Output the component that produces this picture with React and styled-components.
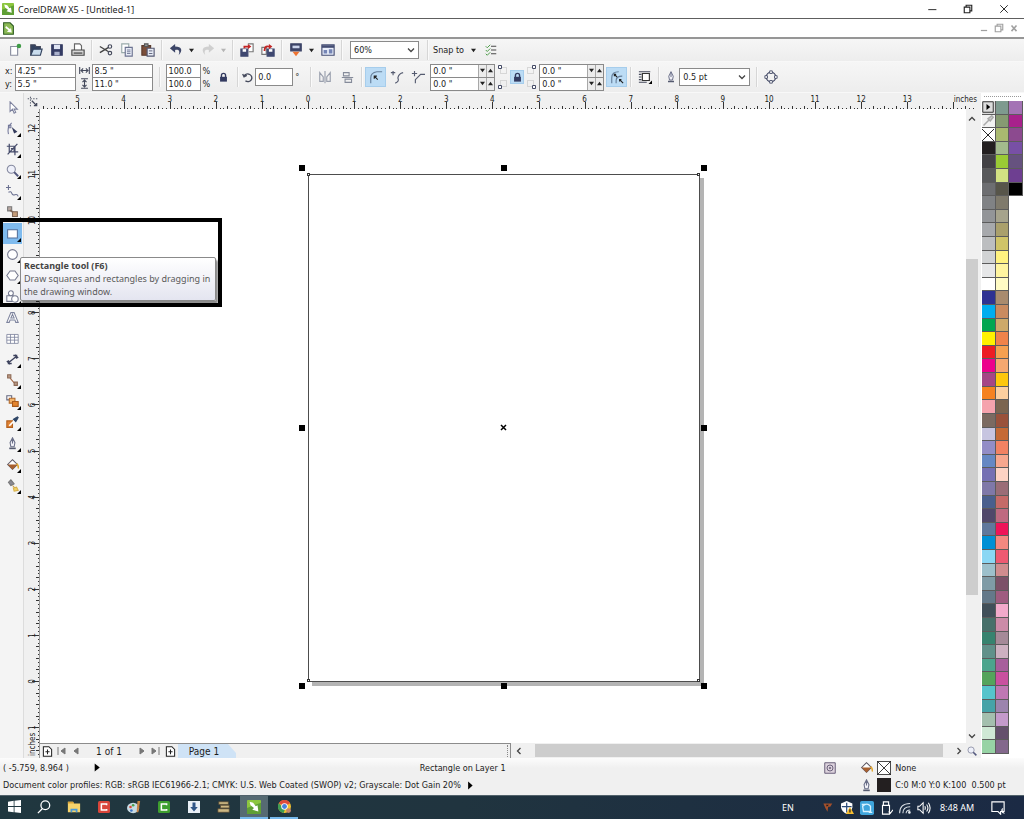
import React from 'react';
import styled, { createGlobalStyle, css } from 'styled-components';

const UI_FONT = '"DejaVu Sans Condensed", "DejaVu Sans", sans-serif';
const TITLE_FONT = '"Noto Sans", "Open Sans", sans-serif';

const GlobalStyle = createGlobalStyle`
  * {
    box-sizing: border-box;
  }
  body {
    margin: 0;
    background: #f0f0f0;
    color: #1c1c1c;
    font-family: ${UI_FONT};
    font-size: 9px;
  }
  button, input, select {
    font: inherit;
    color: inherit;
  }
  svg {
    display: block;
    flex: none;
  }
`;

const Window = styled.div`
  position: relative;
  display: flex;
  flex-direction: column;
  min-height: 100vh;
  overflow: hidden;
`;

const TitleBar = styled.header`
  display: flex;
  align-items: center;
  gap: 4px;
  height: 19px;
  padding: 0 15px 0 2px;
  background: #fff;
  border-bottom: 1px solid #5e5e5e;
`;

const Title = styled.h1`
  flex: 1;
  margin: 0;
  font-family: ${TITLE_FONT};
  font-size: 9px;
  font-weight: 400;
`;

const MenuBar = styled.div`
  display: flex;
  align-items: center;
  justify-content: space-between;
  height: 20px;
  padding: 0 5px 0 2px;
  background: #fff;
  border-bottom: 2px solid #969696;
`;

const WindowControls = styled.div`
  display: flex;
  gap: ${({ $small }) => ($small ? '5px' : '26px')};
  color: ${({ $small }) => ($small ? '#a0a0a0' : '#222')};
`;

const PlainButton = styled.button`
  display: flex;
  align-items: center;
  justify-content: center;
  padding: 0;
  border: 0;
  background: none;
`;

const Toolbar = styled.div`
  display: flex;
  align-items: center;
  height: ${({ $height }) => $height}px;
  padding-left: 4px;
  background: linear-gradient(#f6f6f6, #ededed);
  border-bottom: 1px solid #f8f8f8;
`;

const ToolButton = styled(PlainButton)`
  width: ${({ $narrow }) => ($narrow ? 14 : 21)}px;
  height: ${({ $narrow }) => ($narrow ? 14 : 20)}px;
  ${({ $active }) =>
    $active &&
    css`
      background: #bcdcf5;
      border: 1px solid #a6cdec;
    `}
`;

const DropButton = styled(PlainButton)`
  width: 11px;
  height: 20px;
`;

const Separator = styled.span`
  width: 1px;
  height: 20px;
  margin: 0 3px;
  background: #d6d6d6;
  box-shadow: 1px 0 #fafafa;
`;

const SelectBox = styled.label`
  position: relative;
  display: flex;
  align-items: center;
  width: ${({ $width }) => $width}px;
  height: 18px;
  background: #fff;
  border: 1px solid #8a8a8a;

  svg {
    position: absolute;
    right: 3px;
    pointer-events: none;
  }
`;

const Select = styled.select`
  width: 100%;
  height: 100%;
  padding: 0 3px;
  border: 0;
  background: none;
  appearance: none;
`;

const SnapButton = styled(PlainButton)`
  gap: 7px;
  margin: 0 4px 0 2px;
`;

const PropGroup = styled.div`
  display: flex;
  align-items: center;
  gap: 2px;
  padding-left: ${({ $start }) => $start || 0}px;
  padding-right: ${({ $end }) => $end || 0}px;
`;

const LabelStack = styled.div`
  display: flex;
  flex-direction: column;
  gap: 1px;

  > * {
    display: flex;
    align-items: center;
    height: 12px;
  }
`;

const FieldStack = styled.div`
  width: ${({ $width }) => $width}px;
  background: #fff;
  border: 1px solid #8a8a8a;
`;

const FieldRow = styled.div`
  display: flex;
  align-items: center;
  height: ${({ $tall }) => ($tall ? 16 : 12)}px;

  & + & {
    border-top: 1px solid #8a8a8a;
    height: 13px;
  }
`;

const Field = styled.input`
  flex: 1;
  width: 100%;
  min-width: 0;
  height: 100%;
  padding: 0 2px;
  border: 0;
  background: none;
`;

const SpinButton = styled(PlainButton)`
  width: 8px;
  height: 100%;
  background: #ececec;
  border-left: 1px solid #a8a8a8;
`;

const Workspace = styled.main`
  display: flex;
  flex: 1;
  min-height: 0;
`;

const Toolbox = styled.nav`
  display: flex;
  flex-direction: column;
  width: 24px;
  padding: 4px 0 0 3px;
  background: #f4f4f4;
  border-right: 1px solid #dcdcdc;
`;

const BoxTool = styled(PlainButton)`
  position: relative;
  width: 19px;
  height: 21px;
  background: ${({ $active }) => ($active ? '#7fbbee' : 'none')};

  ${({ $flyout }) =>
    $flyout &&
    css`
      &::after {
        content: '';
        position: absolute;
        right: 1px;
        bottom: 2px;
        border: 2px solid;
        border-color: transparent #000 #000 transparent;
      }
    `}
`;

const DocumentGrid = styled.section`
  flex: 1;
  min-width: 0;
  display: grid;
  grid-template-columns: 16px minmax(0, 1fr) 12px;
  grid-template-rows: 16px minmax(0, 1fr) 15px;
`;

const RulerCorner = styled.div`
  display: flex;
  align-items: center;
  justify-content: center;
`;

const TopRuler = styled.svg`
  grid-column: 2 / 4;
  width: 100%;
  height: 16px;
`;

const SideRuler = styled.svg`
  grid-row: 2 / 4;
  width: 16px;
  height: 100%;
`;

const Canvas = styled.div`
  display: flex;
  align-items: center;
  justify-content: center;
  background: #fff;
`;

const Page = styled.div`
  position: relative;
  width: 392px;
  height: 508px;
  margin: 4px 0 0 2px;
  background: #fff;
  border: 1px solid #4d4d4d;
  box-shadow: 4px 4px #b4b4b4;
`;

const Handle = styled.span`
  position: absolute;
  left: ${({ $x }) => $x};
  top: ${({ $y }) => $y};
  width: 6px;
  height: 6px;
  margin: -3px;
  background: #000;
`;

const PageNode = styled.span`
  position: absolute;
  left: ${({ $x }) => $x};
  top: ${({ $y }) => $y};
  width: 3px;
  height: 3px;
  margin: -2px;
  background: #fff;
  border: 1px solid #333;
`;

const CentreMark = styled.svg`
  position: absolute;
  left: 50%;
  top: 50%;
  margin: -4px;
`;

const ScrollColumn = styled.div`
  display: flex;
  flex-direction: column;
  align-items: center;
  padding: 6px 0 3px;
`;

const Track = styled.div`
  flex: 1;
  display: flex;
  flex-direction: ${({ $vertical }) => ($vertical ? 'column' : 'row')};
  width: 100%;
  height: 100%;
`;

const Thumb = styled.div`
  flex: ${({ $size }) => $size};
  background: #cdcdcd;
`;

const Gap = styled.div`
  flex: ${({ $size }) => $size};
`;

const BottomRow = styled.div`
  display: grid;
  grid-template-columns: 471px minmax(0, 1fr);
`;

const PageNav = styled.div`
  display: flex;
  align-items: center;
  padding-left: 2px;
  border-top: 1px solid #8c8c8c;
  border-right: 1px solid #8c8c8c;
  font-size: 10px;
`;

const PageButtons = styled.div`
  display: flex;
  align-items: center;
  gap: 4px;
`;

const PageCount = styled.span`
  width: 56px;
  text-align: center;
`;

const PageTab = styled.button`
  width: 58px;
  height: 14px;
  margin-left: 2px;
  padding: 0 6px 0 0;
  border: 0;
  background: #cfe3f6;
  clip-path: polygon(0 0, 50px 0, 100% 9px, 100% 100%, 0 100%);
`;

const Splitter = styled.span`
  height: 12px;
  margin-left: auto;
  margin-right: 2px;
  border-left: 1px dotted #888;
`;

const ScrollRow = styled.div`
  display: flex;
  align-items: center;
  padding: 1px 3px 1px 4px;
`;

const PalettePanel = styled.aside`
  display: flex;
  flex-direction: column;
  width: 46px;
  padding: 3px 1px 4px 4px;
  background: linear-gradient(to right, #f0f0f0 3px, #fff 3px);
`;

const Grip = styled.span`
  height: 2px;
  margin: 0 2px 3px;
  border-top: 1px dotted #999;
`;

const Palette = styled.div`
  flex: 1;
  display: grid;
  grid-auto-flow: column;
  grid-template-columns: repeat(3, minmax(0, 1fr));
  grid-template-rows: repeat(48, minmax(0, 1fr));
`;

const Swatch = styled.button`
  display: flex;
  align-items: center;
  justify-content: center;
  min-height: 0;
  padding: 0;
  overflow: hidden;
  border: 0;
  border-right: 1px solid #5c5c5c;
  border-bottom: 1px solid #5c5c5c;
  background: ${({ $color }) => $color};
`;

const StatusBar = styled.footer`
  display: grid;
  grid-template-columns: 41% 39% 1fr;
  grid-template-rows: 19px 16px;
  align-items: center;
  height: 37px;
  background: linear-gradient(#fcfcfc, #f0f0f0 10px);
`;

const StatusCell = styled.div`
  display: flex;
  align-items: center;
  gap: ${({ $gap }) => $gap || 4}px;
  padding-left: ${({ $inset }) => $inset || 0}px;
  grid-column: ${({ $span }) => ($span ? `span ${$span}` : 'auto')};
  white-space: pre;
`;

const ColorChip = styled.span`
  display: flex;
  width: 14px;
  height: 14px;
  background: ${({ $color }) => $color};
`;

const Taskbar = styled.nav`
  display: flex;
  align-items: stretch;
  justify-content: space-between;
  height: 24px;
  background: linear-gradient(to right, #20373f, #20343f 45%, #1b2a44);
  border-top: 1px solid #52626b;
  color: #fff;
  font-family: ${TITLE_FONT};
`;

const TaskGroup = styled.div`
  display: flex;
  align-items: stretch;
`;

const TaskButton = styled(PlainButton)`
  width: 28px;
  margin-right: 2px;
  border-bottom: 2px solid ${({ $open }) => ($open ? '#76b9ed' : 'transparent')};
  background: ${({ $active }) => ($active ? '#566a72' : 'none')};
`;

const TrayButton = styled(PlainButton)`
  width: ${({ $width }) => $width || 19}px;
  font-family: ${TITLE_FONT};
  font-size: 9px;
`;

const Callout = styled.div`
  position: absolute;
  left: -1px;
  top: 218px;
  width: 223px;
  height: 89px;
  border: 4px solid #000;
`;

const Tooltip = styled.div`
  position: absolute;
  left: 20px;
  top: 257px;
  width: 196px;
  padding: 1px 2px 2px 3px;
  border: 1px solid #8a8a8a;
  border-radius: 2px;
  background: linear-gradient(#fff, #e4e5f0);
  box-shadow: 2px 3px 2px rgba(0, 0, 0, 0.45);
  color: #5a5a5a;
  font-family: ${TITLE_FONT};
  font-size: 9px;
  line-height: 13px;

  strong {
    display: block;
    color: #444;
  }
`;

const Icon = ({ size = 14, children, ...rest }) => (
  <svg
    width={size}
    height={size}
    viewBox="0 0 16 16"
    fill="none"
    stroke="#454a5c"
    strokeWidth="1.3"
    aria-hidden="true"
    {...rest}
  >
    {children}
  </svg>
);

const CorelIcon = ({ size }) => (
  <Icon size={size} stroke="none">
    <rect width="16" height="16" rx="1" fill="#8cc63f" />
    <path d="M0 9L16 3V16H0Z" fill="#5f9f35" />
    <path d="M3 2l4 1 3 4 2-1 1 7-7-2 2-2-4-3z" fill="#fff" />
  </Icon>
);

const DocIcon = () => (
  <Icon size={13} stroke="#2e5c22">
    <path d="M2 1h8l4 4v10H2z" fill="#8cba55" />
    <path d="M5 5l5 4 1-2 1 6-6-1 2-2-4-3z" fill="#fff" stroke="none" />
  </Icon>
);

const Caret = ({ up, color = '#222', size = 5 }) => (
  <svg width={size} height={size} viewBox="0 0 6 6" aria-hidden="true">
    <path d={up ? 'M0 5L3 1L6 5Z' : 'M0 1L3 5L6 1Z'} fill={color} />
  </svg>
);

const Chevron = ({ angle = 0, size = 8 }) => (
  <svg width={size} height={size} viewBox="0 0 8 8" aria-hidden="true">
    <path
      d="M1 2.5L4 5.5L7 2.5"
      fill="none"
      stroke="#444"
      strokeWidth="1.3"
      transform={`rotate(${angle} 4 4)`}
    />
  </svg>
);

const icons = {
  new: (
    <>
      <path d="M3 4h8v10H3z" fill="#fff" stroke="#8a8fa0" />
      <circle cx="12.5" cy="3.5" r="2.6" fill="#3e9b45" stroke="none" />
    </>
  ),
  open: (
    <>
      <path d="M2 14V2h5l1 2h5v3" fill="#33435f" />
      <path d="M2 14l3-7h10l-2 7z" fill="#c9dced" stroke="#33435f" />
    </>
  ),
  save: (
    <>
      <path d="M2 2h12v12H2z" fill="#343b63" stroke="#343b63" />
      <path d="M4.500 2h7v5h-7z" fill="#dfe4f2" stroke="none" />
      <path d="M5 10h6v4H5z" fill="#aab1cc" stroke="none" />
    </>
  ),
  print: (
    <>
      <path d="M4 8V1h6l2 2v5" fill="#fff" stroke="#666" />
      <path d="M1 8h14v6H1z" fill="#d8d8d8" stroke="#444" />
      <path d="M3 11.500h10" stroke="#333" />
    </>
  ),
  cut: (
    <>
      <path d="M1 4l10 6M1 11l10-6" stroke="#444" strokeWidth="1.600" />
      <circle cx="12.500" cy="4" r="2" />
      <circle cx="12.500" cy="11.500" r="2" />
    </>
  ),
  copy: (
    <>
      <path d="M2 1h8v10H2z" fill="#fff" stroke="#9aa" />
      <path d="M6 5h8v10H6z" fill="#e8ecf6" stroke="#6c7391" />
      <path d="M8 8h4M8 10h4M8 12h4" stroke="#6c7391" strokeWidth="1" />
    </>
  ),
  paste: (
    <>
      <path d="M1 3h10v11H1z" fill="#7b4f3a" stroke="#5a3a2c" />
      <path d="M4 1h4v3H4z" fill="#999" stroke="#555" />
      <path d="M7 6h8v9H7z" fill="#e8ecf6" stroke="#555a73" />
      <path d="M9 9h4M9 12h4" stroke="#555a73" strokeWidth="1" />
    </>
  ),
  undo: <path d="M7 1L1 6l6 5V8c4-1 6 1 4 6 5-5 4-10-4-10z" fill="#3d4668" stroke="none" />,
  redo: <path d="M9 1l6 5-6 5V8c-4-1-6 1-4 6C0 9 1 4 9 4z" fill="#cfcfcf" stroke="none" />,
  import: (
    <>
      <path d="M9 1h6v9h-5" fill="#fff" stroke="#777" />
      <path d="M1 7h8v8H1z" fill="#3f4870" stroke="#3f4870" />
      <path d="M3 7h4v3H3z" fill="#fff" stroke="none" />
      <path d="M4 6V3h5V1l4 3-4 3V5H6v1z" fill="#c22525" stroke="none" />
    </>
  ),
  export: (
    <>
      <path d="M1 5h5v8H1z" fill="#fff" stroke="#777" />
      <path d="M7 7h8v8H7z" fill="#3f4870" stroke="#3f4870" />
      <path d="M9 7h4v3H9z" fill="#fff" stroke="none" />
      <path d="M3 9q0-7 6-6V1l4 3-4 3V5Q5 4 5 9z" fill="#c22525" stroke="none" />
    </>
  ),
  launcher: (
    <>
      <path d="M2 1h12v8H2z" fill="#3c4468" stroke="#3c4468" />
      <path d="M4 3h8v3H4z" fill="#ccd5ed" stroke="none" />
      <path d="M4 10h8l-4 5z" fill="#ef7330" stroke="none" />
    </>
  ),
  welcome: (
    <>
      <path d="M1 2h14v12H1z" fill="#e9eefa" stroke="#444d73" />
      <path d="M1 4h14" stroke="#444d73" strokeWidth="3" />
      <path d="M3 8h4v4H3zM9 7h4v5H9z" fill="#7585b5" stroke="none" />
    </>
  ),
  options: (
    <>
      <path d="M8 3h7M8 8h7M8 13h7" stroke="#444" />
      <path d="M1 3l2 2 4-4M1 8l2 2 4-4M1 13l2 2 4-4" stroke="#4c9a48" />
    </>
  ),
  width: <path d="M1 3v10M15 3v10M3 8h10M6 5L3 8l3 3M10 5l3 3-3 3" strokeWidth="1.600" />,
  height: <path d="M3 1h10M3 15h10M8 3v10M5 6l3-3 3 3M5 10l3 3 3-3" strokeWidth="1.600" />,
  lock: (
    <>
      <path d="M5 8V5q0-3 3-3t3 3v3" strokeWidth="2" stroke="#333a60" />
      <path d="M3 7h10v7H3z" fill="#333a60" stroke="none" />
    </>
  ),
  rotate: <path d="M3 6a6 5.500 0 1 1 2 7M1 3l2 4 4-2" strokeWidth="2" />,
  mirrorH: <path d="M2 3v10h4V8zM8 1v14M14 3v10h-4V8z" stroke="#999fad" />,
  mirrorV: <path d="M3 2h7v4H3zM1 8h14M5 10h8v4H5z" stroke="#858b9a" />,
  round: (
    <>
      <path d="M2 15V9q0-6 7-7h6" stroke="#667f9b" />
      <path d="M6 7l4 4M6 10V7h3" stroke="#222" />
    </>
  ),
  scallop: <path d="M1 3h5M3.500 1v5M6 15q5-2 3-6 1-5 6-6" stroke="#555b70" />,
  chamfer: <path d="M1 4h6M4 1v6M5 15v-4l6-6h5" stroke="#555b70" />,
  relative: (
    <>
      <path d="M2 15V9q0-7 8-7M7 15v-3q0-5 7-5" stroke="#667f9b" />
      <path d="M5 5l3 3M5 7V5h2M11 11l4 4M11 13v-2h2" stroke="#222" />
    </>
  ),
  wrap: (
    <>
      <path d="M1 2h13M1 5h3M1 8h3M1 11h3M1 14h9" />
      <path d="M5 4h8v8H5z" fill="#fff" stroke="#333" />
      <path d="M16 16h-4l4-4z" fill="#000" stroke="none" />
    </>
  ),
  pen: (
    <>
      <path d="M8 1l3 6-1 5H6L5 7zM8 1v7" fill="#f2f2f8" stroke="#6a6f88" />
      <path d="M4 13h8v2H4z" fill="#555b70" stroke="none" />
    </>
  ),
  curves: (
    <>
      <circle cx="8" cy="8" r="5.500" stroke="#444a66" />
      <path
        d="M6.500 1h3v3h-3zM6.500 12h3v3h-3zM1 6.500h3v3H1zM12 6.500h3v3h-3z"
        fill="#fff"
        stroke="#444a66"
        strokeWidth="1"
      />
    </>
  ),
  pick: <path d="M5 1v12l3-3 2 5 2-1-2-4h4z" fill="#fff" stroke="#7c819d" />,
  shape: (
    <>
      <path d="M3 15Q1 6 7 1M3 4h3v3H3z" stroke="#73789a" />
      <path d="M7 6l7 6-4 2z" fill="#333a5c" stroke="none" />
    </>
  ),
  crop: <path d="M4 1v10h11M1 4h10v11M2 14L14 1M6 7h4v3" stroke="#454b6a" strokeWidth="1.500" />,
  zoom: (
    <>
      <circle cx="6.500" cy="6.500" r="5" fill="#eef0fa" stroke="#85899f" />
      <path d="M10 10l5 5" stroke="#555a80" strokeWidth="2.500" />
    </>
  ),
  freehand: <path d="M3 0v6M0 3h6M3 9q3-2 4 1t4 2 4 2" stroke="#6a7090" />,
  smartFill: (
    <>
      <path d="M2 1h5v5H2z" fill="#b8a8a2" stroke="#777" />
      <path d="M5 5l4 3" stroke="#7d6658" strokeWidth="2" />
      <path d="M8 7h6v6H8z" fill="#c39b78" stroke="#7d6658" />
    </>
  ),
  rectangle: <path d="M2 3.500h12v10H2z" fill="#fff" stroke="#55719c" />,
  ellipse: <circle cx="8" cy="8" r="6" fill="#fff" stroke="#74788e" />,
  polygon: <path d="M5 2.500h6l4 5.500-4 5.500H5L1 8z" fill="#fff" stroke="#74788e" />,
  shapes: (
    <>
      <path d="M1 7h8v7H1z" fill="#fff" stroke="#74788e" />
      <circle cx="6" cy="4" r="3" fill="#fff" stroke="#74788e" />
      <circle cx="11" cy="11" r="4" fill="#fff" stroke="#74788e" />
    </>
  ),
  letter: (
    <path
      d="M1 14L6 2h4l5 12h-3l-1-3H5l-1 3zM6 8.500h4L8 4z"
      fill="#fff"
      stroke="#7d839d"
    />
  ),
  table: <path d="M1 3h14v11H1zM1 6.500h14M1 10h14M5.500 3v11M10.500 3v11" fill="#fff" stroke="#7d839d" strokeWidth="1" />,
  dimension: <path d="M3 12L13 4M1 10l4 4M11 2l4 4M3 9v4h4M9 3h4v4" stroke="#3c415c" strokeWidth="1.700" />,
  connector: (
    <>
      <path d="M5 5l6 7" stroke="#a0623f" />
      <path d="M2 1h4v4H2zM10 10h4v4h-4z" fill="#ba9a86" stroke="#8d6a56" />
    </>
  ),
  blend: (
    <>
      <path d="M1 1h6v5H1z" fill="#fff" stroke="#61657d" />
      <path d="M4 4h7v6H4z" fill="#f2b56d" stroke="#b36a2a" />
      <path d="M8 8h7v6H8z" fill="#e4862f" stroke="#a85b1c" />
    </>
  ),
  eyedropper: (
    <>
      <path d="M1 6h7v8H1z" fill="#e08334" stroke="#b35f1d" />
      <path d="M4 12l7-7" stroke="#fff" strokeWidth="2" />
      <path d="M9 4l3 3 3-5-1-1z" fill="#2f4566" stroke="#2f4566" />
    </>
  ),
  fill: (
    <>
      <path d="M2 8l6-6 6 6-6 6z" fill="#fff" stroke="#5a5560" />
      <path d="M2 8h12l-6 6z" fill="#a8602f" stroke="none" />
      <path d="M13 7q3 3 2 6" stroke="#e0a632" strokeWidth="2" />
    </>
  ),
  interactiveFill: (
    <>
      <path d="M3 4l3-3 4 5-4 2z" fill="#8a8a94" stroke="#777" />
      <path d="M8 8l5 5" stroke="#c7983a" />
      <path d="M9 11l4-1 2 4-5 1z" fill="#f2d268" stroke="#d7b04a" />
    </>
  ),
};

const Glyph = ({ name, size }) => <Icon size={size}>{icons[name]}</Icon>;

const toolbox = [
  ['pick', false],
  ['shape', true],
  ['crop', true],
  ['zoom', true],
  ['freehand', true],
  ['smartFill', true],
  ['rectangle', true],
  ['ellipse', true],
  ['polygon', true],
  ['shapes', true],
  ['letter', false],
  ['table', false],
  ['dimension', true],
  ['connector', true],
  ['blend', true],
  ['eyedropper', true],
  ['pen', true],
  ['fill', true],
  ['interactiveFill', true],
];

const paletteColumns = [
  [
    '#231f20', '#434245', '#58595b', '#6d6e71', '#808285', '#939598', '#a7a9ac', '#bcbec0',
    '#d1d3d4', '#e6e7e8', '#ffffff', '#2e3192', '#00adef', '#00a651', '#fff200', '#ed1c24',
    '#ec008c', '#a54686', '#f58220', '#f5a3ad', '#7b6a61', '#c7c5e0', '#938dc6', '#6688c3',
    '#7570b3', '#7f78a8', '#4a5f8d', '#51486a', '#60789c', '#0090d5', '#8ad7f4', '#9dc0cb',
    '#7f9ba6', '#64798a', '#414f59', '#47706a', '#37836f', '#61918a', '#4ca58d', '#54a45c',
    '#56c4cb', '#46a3a8', '#a4bfae', '#cfe8d5', '#97d3a5',
  ],
  [
    '#7e9a8f', '#869a72', '#a9b970', '#a3bb8d', '#9acb35', '#d2e183', '#57554a', '#7f7a6c',
    '#a6a38c', '#aaa06c', '#d0c468', '#fff280', '#fff5a0', '#fffbc4', '#a98b6e', '#c98b60',
    '#cda96a', '#f0834a', '#f5a050', '#f5a870', '#fdc70c', '#fbcf9f', '#7b6550', '#9a523b',
    '#c56a35', '#f28263', '#f7a78e', '#fcd2c3', '#9a6d77', '#c56a68', '#bf6a80', '#ee1458',
    '#f38880', '#ee5a72', '#d08c8e', '#7c5168', '#9f5c80', '#f3aacb', '#cc8ba8', '#a58a98',
    '#cdb0c0', '#a85f9c', '#c9519f', '#bf77b3', '#9c84ae', '#c49acb', '#64506c', '#83688c',
  ],
  ['#a473b5', '#a8218c', '#8c4a8f', '#7850a5', '#66527f', '#6e3f91', '#000000'],
];

// 60% zoom: pixels per inch on both rulers
const INCH = 46.1;
const STEPS = 12;

const tickLength = (step) => {
  if (step % STEPS === 0) return 7;
  return step % 3 === 0 ? 3 : 1;
};

const range = (from, to) => Array.from({ length: to - from + 1 }, (_, i) => from + i);
const wholeInches = (steps) => steps.filter((step) => step % STEPS === 0);

const columnSteps = range(-69, 173);
const rowSteps = range(-148, 19);

const HorizontalRuler = () => (
  <TopRuler>
    <svg x="50%" style={{ overflow: 'visible' }}>
      <g transform="translate(-201 0)" stroke="#333">
        {columnSteps.map((step) => {
          const x = Math.round((step * INCH) / STEPS) + 0.5;
          return <path key={step} d={`M${x} 16v-${tickLength(step)}`} />;
        })}
        <g stroke="none" fill="#222" fontSize="8" textAnchor="middle">
          {wholeInches(columnSteps)
            .filter((step) => step / STEPS < 14)
            .map((step) => (
              <text key={step} x={(step * INCH) / STEPS} y="9">
                {Math.abs(step / STEPS)}
              </text>
            ))}
        </g>
      </g>
    </svg>
    <text x="100%" dx="-1" y="9" fontSize="8" textAnchor="end" fill="#222">
      inches
    </text>
  </TopRuler>
);

const VerticalRuler = () => (
  <SideRuler>
    <svg y="50%" style={{ overflow: 'visible' }}>
      <g transform="translate(0 248)" stroke="#333">
        {rowSteps.map((step) => {
          const y = Math.round((step * INCH) / STEPS);
          return <path key={step} d={`M16 ${y}h-${tickLength(step) + 1}`} />;
        })}
        <g stroke="none" fill="#222" fontSize="8" textAnchor="middle">
          {wholeInches(rowSteps).map((step) => (
            <text key={step} transform={`translate(11 ${(step * INCH) / STEPS}) rotate(-90)`}>
              {Math.abs(step / STEPS)}
            </text>
          ))}
        </g>
      </g>
    </svg>
    <line x1="15.5" x2="15.5" y1="0" y2="100%" stroke="#999" />
    <svg y="100%" style={{ overflow: 'visible' }}>
      <text transform="translate(11 -2) rotate(-90)" fontSize="8" fill="#222">
        inches
      </text>
    </svg>
  </SideRuler>
);

const Tool = ({ name, active, narrow, size }) => (
  <ToolButton type="button" aria-label={name} $active={active} $narrow={narrow}>
    <Glyph name={name} size={size} />
  </ToolButton>
);

const Drop = ({ color }) => (
  <DropButton type="button" aria-label="more">
    <Caret color={color} />
  </DropButton>
);

const StackedFields = ({ width, values, names, spin }) => (
  <FieldStack $width={width}>
    {values.map((value, i) => (
      <FieldRow key={names[i]} $tall={values.length === 1}>
        <Field id={names[i]} aria-label={names[i]} defaultValue={value} />
        {spin && (
          <>
            <SpinButton type="button" aria-label={`${names[i]} down`}>
              <Caret />
            </SpinButton>
            <SpinButton type="button" aria-label={`${names[i]} up`}>
              <Caret up />
            </SpinButton>
          </>
        )}
      </FieldRow>
    ))}
  </FieldStack>
);

const CornerMarks = ({ right }) => (
  <svg width="11" height="26" viewBox="0 0 11 26" fill="none" aria-hidden="true">
    <g transform={right ? 'translate(11 0) scale(-1 1)' : undefined}>
      <path d="M3.500 3.500h6v6h-6zM3.500 16.500h6v6h-6z" stroke="#bbb" strokeDasharray="1 1" />
      <path d="M1.500 1.500h3v3h-3zM1.500 21.500h3v3h-3z" fill="#fff" stroke="#444b66" />
    </g>
  </svg>
);

const StandardBar = () => (
  <Toolbar $height={23}>
    <Tool name="new" />
    <Tool name="open" />
    <Tool name="save" />
    <Tool name="print" />
    <Separator />
    <Tool name="cut" />
    <Tool name="copy" />
    <Tool name="paste" />
    <Separator />
    <Tool name="undo" />
    <Drop />
    <Tool name="redo" />
    <Drop color="#b5b5b5" />
    <Separator />
    <Tool name="import" />
    <Tool name="export" />
    <Separator />
    <Tool name="launcher" />
    <Drop />
    <Tool name="welcome" />
    <Separator />
    <PropGroup $start={5} $end={5}>
      <SelectBox $width={69}>
        <Select aria-label="Zoom level" defaultValue="60%">
          <option>60%</option>
        </Select>
        <Chevron />
      </SelectBox>
    </PropGroup>
    <Separator />
    <SnapButton type="button">
      Snap to
      <Caret />
    </SnapButton>
    <Tool name="options" size={12} />
  </Toolbar>
);

const PropertyBar = () => (
  <Toolbar $height={31}>
    <PropGroup $start={1}>
      <LabelStack>
        <label htmlFor="X position">x:</label>
        <label htmlFor="Y position">y:</label>
      </LabelStack>
      <StackedFields width={61} names={['X position', 'Y position']} values={['4.25 "', '5.5 "']} />
    </PropGroup>
    <PropGroup $start={3} $end={3}>
      <LabelStack>
        <span>
          <Glyph name="width" size={11} />
        </span>
        <span>
          <Glyph name="height" size={11} />
        </span>
      </LabelStack>
      <StackedFields width={61} names={['Width', 'Height']} values={['8.5 "', '11.0 "']} />
    </PropGroup>
    <Separator />
    <PropGroup $start={3} $end={3}>
      <StackedFields width={35} names={['Scale X', 'Scale Y']} values={['100.0', '100.0']} />
      <LabelStack>
        <label htmlFor="Scale X">%</label>
        <label htmlFor="Scale Y">%</label>
      </LabelStack>
    </PropGroup>
    <Tool name="lock" size={11} />
    <Separator />
    <PropGroup $start={1} $end={8}>
      <Glyph name="rotate" size={11} />
      <StackedFields width={38} names={['Angle']} values={['0.0']} />
      <label htmlFor="Angle">°</label>
    </PropGroup>
    <Separator />
    <PropGroup>
      <Tool name="mirrorH" />
      <Tool name="mirrorV" size={13} />
    </PropGroup>
    <Separator />
    <Tool name="round" active />
    <Tool name="scallop" />
    <Tool name="chamfer" />
    <PropGroup $start={2} $end={2}>
      <StackedFields width={65} names={['Top left', 'Bottom left']} values={['0.0 "', '0.0 "']} spin />
      <CornerMarks />
      <Tool name="lock" active narrow size={11} />
      <CornerMarks right />
      <StackedFields width={65} names={['Top right', 'Bottom right']} values={['0.0 "', '0.0 "']} spin />
    </PropGroup>
    <Tool name="relative" active />
    <Separator />
    <Tool name="wrap" />
    <Separator />
    <PropGroup $start={3} $end={3}>
      <Glyph name="pen" size={12} />
      <SelectBox $width={71}>
        <Select aria-label="Outline width" defaultValue="0.5 pt">
          <option>0.5 pt</option>
        </Select>
        <Chevron />
      </SelectBox>
    </PropGroup>
    <Separator />
    <Tool name="curves" />
  </Toolbar>
);

const handleSpots = [
  ['-7px', '-7px'],
  ['50%', '-7px'],
  ['calc(100% + 5px)', '-7px'],
  ['-7px', '50%'],
  ['calc(100% + 5px)', '50%'],
  ['-7px', 'calc(100% + 5px)'],
  ['50%', 'calc(100% + 5px)'],
  ['calc(100% + 5px)', 'calc(100% + 5px)'],
];

const Drawing = () => (
  <Canvas>
    <Page>
      {handleSpots.map(([x, y]) => (
        <Handle key={x + y} $x={x} $y={y} />
      ))}
      {['0%', '100%'].map((x) =>
        ['0%', '100%'].map((y) => <PageNode key={x + y} $x={x} $y={y} />),
      )}
      <CentreMark width="7" height="7" viewBox="0 0 7 7">
        <path d="M1 1l5 5M6 1L1 6" stroke="#000" strokeWidth="1.5" />
      </CentreMark>
    </Page>
  </Canvas>
);

const NavIcon = ({ d, label }) => (
  <PlainButton type="button" aria-label={label}>
    <svg width="10" height="10" viewBox="0 0 10 10">
      <path d={d} fill="#777" stroke="#777" />
    </svg>
  </PlainButton>
);

const AddPage = ({ label }) => (
  <PlainButton type="button" aria-label={label}>
    <Icon size={11} stroke="#222" strokeWidth="1.5">
      <path d="M2 1h8l4 4v10H2zM8 5v7M5 8.500h6" fill="#fff" />
    </Icon>
  </PlainButton>
);

const Navigator = () => (
  <PageNav>
    <PageButtons>
      <AddPage label="Add page before" />
      <NavIcon label="First page" d="M1 1v8M8 2L4 5l4 3z" />
      <NavIcon label="Previous page" d="M7 2L3 5l4 3z" />
    </PageButtons>
    <PageCount>1 of 1</PageCount>
    <PageButtons>
      <NavIcon label="Next page" d="M3 2l4 3-4 3z" />
      <NavIcon label="Last page" d="M8 1v8M1 2l4 3-4 3z" />
      <AddPage label="Add page after" />
    </PageButtons>
    <PageTab type="button">Page 1</PageTab>
    <Splitter />
  </PageNav>
);

const DocumentArea = () => (
  <DocumentGrid>
    <RulerCorner>
      <Icon size={11}>
        <path d="M1 4h14M5 1v14" strokeDasharray="2 2" />
        <path d="M7 7l7 7M14 10v4h-4" strokeWidth="2" />
      </Icon>
    </RulerCorner>
    <HorizontalRuler />
    <VerticalRuler />
    <Drawing />
    <ScrollColumn>
      <Chevron angle={180} />
      <Track $vertical>
        <Gap $size={136} />
        <Thumb $size={336} />
        <Gap $size={137} />
      </Track>
      <Chevron />
    </ScrollColumn>
    <BottomRow>
      <Navigator />
      <ScrollRow>
        <Chevron angle={90} />
        <Track>
          <Gap $size={12} />
          <Thumb $size={408} />
          <Gap $size={12} />
        </Track>
        <Chevron angle={-90} />
      </ScrollRow>
    </BottomRow>
    <PlainButton type="button" aria-label="Navigator">
      <Glyph name="zoom" size={10} />
    </PlainButton>
  </DocumentGrid>
);

const ColorPalette = () => (
  <PalettePanel>
    <Grip />
    <Palette>
      <Swatch type="button" $color="#dcdcdc" aria-label="Palette menu">
        <Icon size={12} stroke="#333">
          <path d="M1 1h14v14H1z" />
          <path d="M6 4l5 4-5 4z" fill="#000" stroke="none" />
        </Icon>
      </Swatch>
      <Swatch type="button" $color="#f2f2f2" aria-label="Eyedropper">
        <Icon size={12} stroke="#aaa">
          <path d="M2 14l7-7M8 5l3 3 4-5-2-2z" fill="#ccc" strokeWidth="2" />
        </Icon>
      </Swatch>
      <Swatch type="button" $color="#fff" aria-label="No color">
        <Icon size={12} stroke="#222">
          <path d="M0 0L16 16M16 0L0 16" />
        </Icon>
      </Swatch>
      {paletteColumns.flat().map((color, i) => (
        <Swatch key={i} type="button" $color={color} aria-label={color} />
      ))}
    </Palette>
  </PalettePanel>
);

const Status = () => (
  <StatusBar>
    <StatusCell $inset={3} $gap={24}>
      <span>( -5.759, 8.964 )</span>
      <Icon size={9} stroke="none">
        <path d="M3 1l9 7-9 7z" fill="#000" />
      </Icon>
    </StatusCell>
    <StatusCell>Rectangle on Layer 1</StatusCell>
    <StatusCell $inset={5}>
      <Icon size={12} stroke="#675e78">
        <path d="M1 1h14v14H1z" fill="#ddd3dd" />
        <circle cx="8" cy="8" r="4" />
        <circle cx="8" cy="8" r="1" />
      </Icon>
      <StatusCell $inset={20}>
        <Glyph name="fill" size={13} />
        <ColorChip $color="#fff">
          <Icon stroke="#222" strokeWidth="1">
            <path d="M.5.5h15v15H.5zM0 0L16 16M16 0L0 16" />
          </Icon>
        </ColorChip>
        None
      </StatusCell>
    </StatusCell>
    <StatusCell $inset={3} $span={2} $gap={6}>
      <span>
        Document color profiles: RGB: sRGB IEC61966-2.1; CMYK: U.S. Web Coated (SWOP) v2; Grayscale: Dot Gain 20%
      </span>
      <Icon size={9} stroke="none">
        <path d="M2 1l8 7-8 7z" fill="#000" />
      </Icon>
    </StatusCell>
    <StatusCell $inset={41}>
      <Glyph name="pen" size={13} />
      <ColorChip $color="#231f20" />
      C:0 M:0 Y:0 K:100  0.500 pt
    </StatusCell>
  </StatusBar>
);

const RecorderIcon = ({ color }) => (
  <Icon size={12} stroke="none">
    <rect width="16" height="16" rx="2" fill={color} />
    <path d="M11.500 5.500V4H4.500v8h7v-1.500" fill="none" stroke="#fff" strokeWidth="2" />
  </Icon>
);

const Task = ({ label, open, active, children }) => (
  <TaskButton type="button" aria-label={label} $open={open} $active={active}>
    {children}
  </TaskButton>
);

const Tray = () => (
  <TaskGroup>
    <TrayButton type="button" $width={56}>
      EN
    </TrayButton>
    <TrayButton type="button" aria-label="Download manager" $width={22}>
      <Icon size={11} stroke="none">
        <path d="M2 2h13l-3 5h-3l-1 7-3-5z" fill="#a4502c" />
        <path d="M6 4h4l-3 3z" fill="#1a1a1a" />
      </Icon>
    </TrayButton>
    <TrayButton type="button" aria-label="Security">
      <Icon size={13} stroke="none">
        <path d="M7 0l7 3v5q-1 5-7 8-6-3-7-8V3z" fill="#fff" />
        <path d="M7 2v12M1 7h12" stroke="#2b4b79" strokeWidth="1.5" />
        <path d="M11 7l5 9H6z" fill="#f6bd30" />
        <path d="M11 10v4" stroke="#222" strokeWidth="1.5" />
      </Icon>
    </TrayButton>
    <TrayButton type="button" aria-label="Network app">
      <Icon size={14} stroke="none">
        <rect width="16" height="16" rx="2" fill="#3fa5dc" />
        <path d="M3 6q5-5 9 0v6H4zM2 4h4M10 13h4" stroke="#d6f1ff" fill="none" strokeWidth="1.500" />
      </Icon>
    </TrayButton>
    <TrayButton type="button" aria-label="USB">
      <Icon size={14} stroke="#fff">
        <path d="M5 5V1h6v4M4 5h8v10H4zM11 12l2 2 3-4" />
      </Icon>
    </TrayButton>
    <TrayButton type="button" aria-label="Wi-Fi">
      <Icon size={13} stroke="#dfe5ea">
        <path d="M2 15Q2 3 15 3M6 15q0-8 9-8M10 15q0-4 5-4" />
        <circle cx="14" cy="14" r="1" fill="#fff" />
      </Icon>
    </TrayButton>
    <TrayButton type="button" aria-label="Volume">
      <Icon size={14} stroke="#fff" strokeWidth="1.200">
        <path d="M1 6h2l4-4v12l-4-4H1zM9 6q1 2 0 4M11 4q3 4 0 8M13 2q4 6 0 12" />
      </Icon>
    </TrayButton>
    <TrayButton type="button" $width={48}>
      8:48 AM
    </TrayButton>
    <TrayButton type="button" aria-label="Notifications" $width={34}>
      <Icon size={14} stroke="#fff">
        <path d="M1 1h14v11h-4v3l-3-3H1z" />
        <path d="M14 8a3 3 0 1 0 2 6 4 4 0 0 1-2-6z" fill="#fff" stroke="none" />
      </Icon>
    </TrayButton>
    <TrayButton type="button" aria-label="Show desktop" $width={9} />
  </TaskGroup>
);

const TaskBar = () => (
  <Taskbar>
    <TaskGroup>
      <Task label="Start">
        <Icon size={13} stroke="none">
          <path d="M0 2l7-1v6.500H0zM8 1l8-1v7.500H8zM0 8.500h7V15l-7-1zM8 8.500h8V16l-8-1z" fill="#fff" />
        </Icon>
      </Task>
      <Task label="Search">
        <Icon size={14} stroke="#fff" strokeWidth="1.500">
          <circle cx="9.500" cy="6" r="5" />
          <path d="M6 10l-5 5" />
        </Icon>
      </Task>
      <Task label="File Explorer">
        <Icon size={14} stroke="none">
          <path d="M1 2h6l1 2h7v10H1z" fill="#f6d46c" />
          <path d="M1 2h6l1 2H1z" fill="#d9a437" />
          <path d="M4 10h8v4h-2v-2H6v2H4z" fill="#4a9ad8" />
        </Icon>
      </Task>
      <Task label="Recorder">
        <RecorderIcon color="#d9453a" />
      </Task>
      <Task label="Paint">
        <Icon size={14} stroke="none">
          <ellipse cx="7" cy="9" rx="7" ry="6" fill="#c7dbe4" />
          <circle cx="4" cy="8" r="1.500" fill="#d64b3c" />
          <circle cx="7" cy="6" r="1.500" fill="#4a9e4a" />
          <circle cx="5" cy="12" r="1.500" fill="#3b73c5" />
          <path d="M12 1h3l-2 13h-2z" fill="#c88344" />
        </Icon>
      </Task>
      <Task label="Camtasia">
        <RecorderIcon color="#3e9f2f" />
      </Task>
      <Task label="Downloads">
        <Icon size={12} stroke="none">
          <rect width="16" height="16" fill="#e9eff6" />
          <path d="M6 2h4v6h3l-5 6-5-6h3z" fill="#2f5587" />
        </Icon>
      </Task>
      <Task label="Archive">
        <Icon size={14} stroke="#54452d" strokeWidth="0.800">
          <path d="M2 2h11v3H2zM4 6h10v3H4zM1 10h13v4H1z" fill="#cdb884" />
        </Icon>
      </Task>
      <Task label="CorelDRAW" open active>
        <CorelIcon size={14} />
      </Task>
      <Task label="Chrome" open>
        <Icon size={13} stroke="none">
          <circle cx="8" cy="8" r="8" fill="#f2c230" />
          <path d="M1 4a8 8 0 0 1 14 0L8 8z" fill="#de4b3c" />
          <path d="M1 4a8 8 0 0 0 6 12l2-6-3-1z" fill="#3d9c55" />
          <circle cx="8" cy="8" r="4" fill="#fff" />
          <circle cx="8" cy="8" r="3" fill="#4681e0" />
          <circle cx="13" cy="13" r="3" fill="#c7866b" />
        </Icon>
      </Task>
    </TaskGroup>
    <Tray />
  </Taskbar>
);

const Controls = ({ small }) => (
  <WindowControls $small={small}>
    <PlainButton type="button" aria-label="Minimize">
      <Icon size={10} stroke="currentColor" strokeWidth={small ? 2 : 1.5}>
        <path d={small ? 'M3 12h10' : 'M2 9h13'} />
      </Icon>
    </PlainButton>
    <PlainButton type="button" aria-label="Restore">
      <Icon size={10} stroke="currentColor" strokeWidth="1.800">
        <path d="M2 5h9v9H2zM5 5V2h9v9h-3" />
      </Icon>
    </PlainButton>
    <PlainButton type="button" aria-label="Close">
      <Icon size={10} stroke="currentColor" strokeWidth={small ? 2.5 : 1.5}>
        <path d={small ? 'M4 4l8 9M12 4l-8 9' : 'M2 2l12 12M14 2L2 14'} />
      </Icon>
    </PlainButton>
  </WindowControls>
);

const App = () => (
  <>
    <GlobalStyle />
    <Window>
      <TitleBar>
        <CorelIcon size={12} />
        <Title>CorelDRAW X5 - [Untitled-1]</Title>
        <Controls />
      </TitleBar>
      <MenuBar>
        <DocIcon />
        <Controls small />
      </MenuBar>
      <StandardBar />
      <PropertyBar />
      <Workspace>
        <Toolbox>
          {toolbox.map(([name, flyout]) => (
            <BoxTool
              key={name}
              type="button"
              aria-label={name}
              $flyout={flyout}
              $active={name === 'rectangle'}
            >
              <Glyph name={name} size={13} />
            </BoxTool>
          ))}
        </Toolbox>
        <DocumentArea />
        <ColorPalette />
      </Workspace>
      <Status />
      <TaskBar />
      <Callout />
      <Tooltip role="tooltip">
        <strong>Rectangle tool (F6)</strong>
        Draw squares and rectangles by dragging in the drawing window.
      </Tooltip>
    </Window>
  </>
);

export default App;
